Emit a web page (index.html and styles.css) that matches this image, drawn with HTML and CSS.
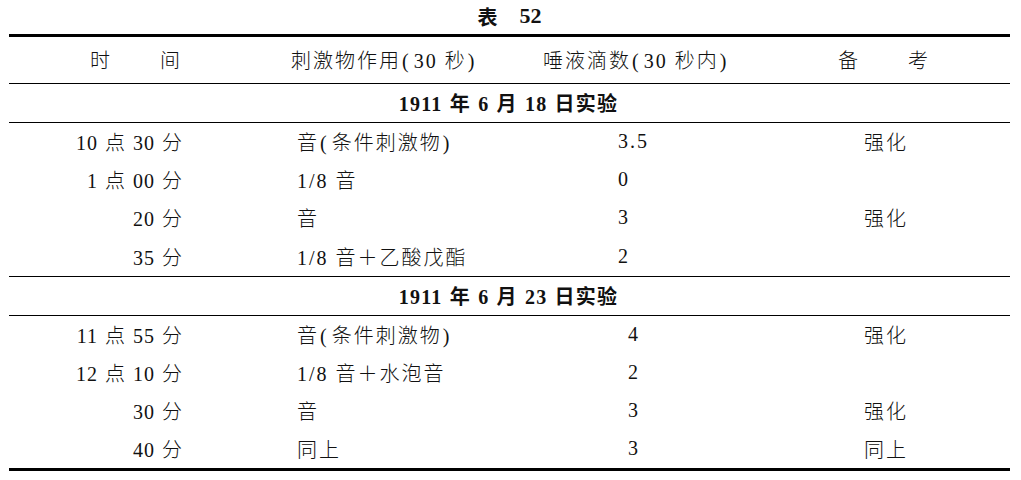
FILE: index.html
```html
<!DOCTYPE html>
<html lang="zh">
<head>
<meta charset="utf-8">
<title>表 52</title>
<link rel="stylesheet" href="styles.css">
</head>
<body>
<div class="page">
  <div class="caption"><span class="cap-cjk">表</span><span class="cap-num">52</span></div>
  <table class="data">
    <colgroup>
      <col class="c1"><col class="c2"><col class="c3"><col class="c4">
    </colgroup>
    <thead>
      <tr class="head">
        <th class="h1">时<span class="gap"></span>间</th>
        <th class="h2">刺激物作用<span class="p">(</span>30 秒<span class="p">)</span></th>
        <th class="h3">唾液滴数<span class="p">(</span>30 秒内<span class="p">)</span></th>
        <th class="h4">备<span class="gap"></span>考</th>
      </tr>
    </thead>
    <tbody class="s1">
      <tr class="section"><td colspan="4">1911 年 6 月 18 日实验</td></tr>
      <tr><td class="t">10 点 30 分</td><td class="s">音<span class="p">(</span>条件刺激物<span class="p">)</span></td><td class="n">3.5</td><td class="r">强化</td></tr>
      <tr><td class="t">1 点 00 分</td><td class="s">1/8 音</td><td class="n">0</td><td class="r"></td></tr>
      <tr><td class="t">20 分</td><td class="s">音</td><td class="n">3</td><td class="r">强化</td></tr>
      <tr><td class="t">35 分</td><td class="s">1/8 音＋乙酸戊酯</td><td class="n">2</td><td class="r"></td></tr>
    </tbody>
    <tbody class="s2">
      <tr class="section"><td colspan="4">1911 年 6 月 23 日实验</td></tr>
      <tr><td class="t">11 点 55 分</td><td class="s">音<span class="p">(</span>条件刺激物<span class="p">)</span></td><td class="n">4</td><td class="r">强化</td></tr>
      <tr><td class="t">12 点 10 分</td><td class="s">1/8 音＋水泡音</td><td class="n">2</td><td class="r"></td></tr>
      <tr><td class="t">30 分</td><td class="s">音</td><td class="n">3</td><td class="r">强化</td></tr>
      <tr><td class="t">40 分</td><td class="s">同上</td><td class="n">3</td><td class="r">同上</td></tr>
    </tbody>
  </table>
</div>
</body>
</html>
```
FILE: styles.css
```css
html, body {
  margin: 0;
  padding: 0;
  background: #fff;
  color: #111;
}
.page {
  padding: 0 11px 0 9px;
  font-family: "Liberation Serif", "Noto Sans CJK SC", serif;
  font-size: 20px;
  font-weight: 300;
}
.caption {
  height: 34px;
  display: flex;
  justify-content: center;
  align-items: center;
  gap: 22px;
  font-weight: 700;
  padding-bottom: 2px;
  box-sizing: border-box;
}
.cap-cjk {
  font-family: "Noto Sans CJK SC", sans-serif;
  font-size: 20px;
}
.cap-num {
  font-size: 22px;
}
.data {
  width: 1001px;
  border-collapse: collapse;
  table-layout: fixed;
  border-top: 3px solid #000;
  border-bottom: 3px solid #000;
}
.c1 { width: 241px; }
.c2 { width: 290px; }
.c3 { width: 220px; }
.c4 { width: 250px; }
th, td {
  padding: 0 0 2px 0;
  font-weight: 300;
  letter-spacing: 2px;
  white-space: nowrap;
  vertical-align: middle;
}
.p {
  display: inline-block;
  margin: 0 3px 0 1px;
}
.head th {
  height: 44px;
  border-bottom: 1px solid #000;
  text-align: left;
}
.gap {
  display: inline-block;
  width: 48px;
}
.h1 { padding-left: 81px; }
.h2 { padding-left: 41px; }
.h3 { padding-left: 3px; }
.head .h4 { text-align: center; padding-right: 2px; }
.section td {
  height: 35px;
  text-align: center;
  font-weight: 700;
  font-size: 20px;
  letter-spacing: 1.2px;
  word-spacing: 1px;
  border-bottom: 1px solid #000;
  padding-right: 2px;
}
.s2 .section td {
  border-top: 1px solid #000;
  height: 36px;
}
.s1 td { height: 36.25px; }
.s2 td { height: 36px; }
.t {
  text-align: right;
  padding-right: 67px;
  letter-spacing: 1px;
  word-spacing: 1px;
}
.s { padding-left: 47px; }
.n { padding-left: 78px; }
.s2 .n { padding-left: 88px; }
.r { text-align: center; padding-left: 2px; }
```
